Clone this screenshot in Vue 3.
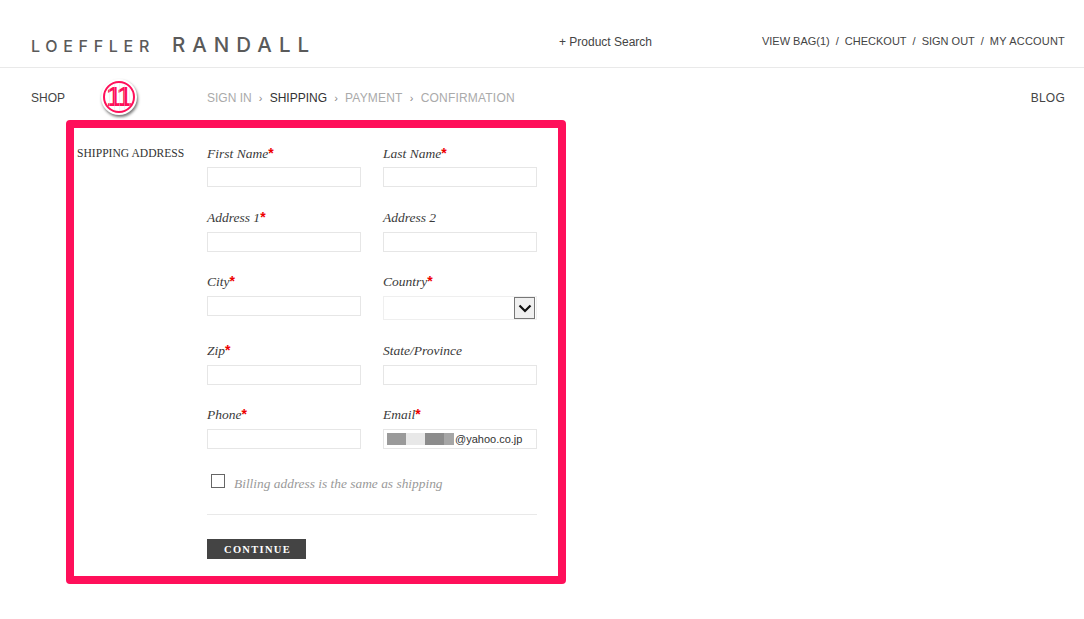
<script setup>
const rows = [
  [{ label: 'First Name', req: true }, { label: 'Last Name', req: true }],
  [{ label: 'Address 1', req: true }, { label: 'Address 2' }],
  [{ label: 'City', req: true }, { label: 'Country', req: true, kind: 'select' }],
  [{ label: 'Zip', req: true }, { label: 'State/Province' }],
  [{ label: 'Phone', req: true }, { label: 'Email', req: true, kind: 'email' }]
]
const blocks = [
  { w: 19, c: '#9a9a9a' },
  { w: 19, c: '#e8e8e8' },
  { w: 19, c: '#8c8c8c' },
  { w: 10, c: '#a6a6a6' }
]
</script>

<template>
  <div class="page">
    <header class="top">
      <div class="logo"><span class="logo-a">LOEFFLER</span><span class="logo-b">RANDALL</span></div>
      <div class="search">+ Product Search</div>
      <nav class="account">
        <span>VIEW BAG(1)</span><i>/</i><span>CHECKOUT</span><i>/</i><span>SIGN OUT</span><i>/</i><span>MY ACCOUNT</span>
      </nav>
    </header>

    <div class="nav">
      <span class="shop">SHOP</span>
      <div class="badge"><span class="badge-ring">11</span></div>
      <div class="steps">
        <span class="off">SIGN IN</span><b>›</b><span class="on">SHIPPING</span><b>›</b><span class="off">PAYMENT</span><b>›</b><span class="off">CONFIRMATION</span>
      </div>
      <span class="blog">BLOG</span>
    </div>

    <section class="frame">
      <h2 class="title">SHIPPING ADDRESS</h2>
      <form class="form" @submit.prevent>
        <div class="grid">
          <template v-for="(row, r) in rows" :key="r">
            <div v-for="f in row" :key="f.label" class="field">
              <label class="label">{{ f.label }}<em v-if="f.req">*</em></label>
              <div v-if="f.kind === 'select'" class="box select">
                <span class="arrow">
                  <svg width="14" height="9" viewBox="0 0 14 9"><path d="M1.5 1.5 7 7l5.500-5.500" fill="none" stroke="#111" stroke-width="2.200"/></svg>
                </span>
              </div>
              <div v-else-if="f.kind === 'email'" class="box email">
                <span v-for="(b, i) in blocks" :key="i" class="mask" :style="{ width: b.w + 'px', background: b.c }"></span>
                <span class="mail">@yahoo.co.jp</span>
              </div>
              <input v-else class="box" type="text" />
            </div>
          </template>
        </div>
        <div class="billing">
          <span class="check"></span>
          <span class="billing-text">Billing address is the same as shipping</span>
        </div>
        <hr class="rule" />
        <button class="continue" type="submit">CONTINUE</button>
      </form>
    </section>
  </div>
</template>

<style scoped>
.page {
  width: 1084px;
  height: 619px;
  overflow: hidden;
  background: #fff;
  color: #444;
  font-family: "Liberation Sans", Arial, sans-serif;
  font-size: 12px;
}
.top {
  height: 67px;
  border-bottom: 1px solid #e9e9e9;
  display: flex;
  padding: 0 19px 0 31px;
  position: relative;
}
.logo {
  width: 528px;
  padding-top: 33px;
  font-family: Inter, sans-serif;
  font-weight: 500;
  color: #5a5a5a;
  display: flex;
  align-items: baseline;
  white-space: nowrap;
}
.logo-a {
  font-size: 16px;
  letter-spacing: 5.700px;
  line-height: 24px;
  width: 141px;
}
.logo-b {
  font-size: 20.500px;
  letter-spacing: 7px;
  line-height: 24px;
}
.search {
  padding-top: 35px;
  line-height: 14px;
  width: 203px;
}
.account {
  padding-top: 35px;
  line-height: 13px;
  font-size: 11px;
  white-space: nowrap;
  flex: 1;
  display: flex;
  justify-content: flex-end;
}
.account i {
  font-style: normal;
  margin: 0 6px;
}
.account span:last-child {
  letter-spacing: 0.200px;
}
.nav {
  height: 52px;
  display: flex;
  padding: 0 19px 0 31px;
  position: relative;
  font-size: 12px;
  line-height: 60px;
}
.nav > span,
.steps {
  height: 60px;
}
.shop {
  width: 176px;
}
.blog {
  letter-spacing: 0.250px;
}
.steps {
  flex: 1;
  white-space: nowrap;
}
.steps b {
  font-weight: normal;
  color: #888;
  margin: 0 7.170px;
  font-size: 11px;
}
.off {
  color: #aaa;
}
.on {
  color: #333;
}
.on ~ .off {
  letter-spacing: 0.200px;
}
.badge {
  position: absolute;
  left: 101px;
  top: 11px;
  width: 36px;
  height: 36px;
  border-radius: 50%;
  background: #fff;
  box-shadow: 1px 2px 3px rgba(0, 0, 0, 0.55);
  display: flex;
  align-items: center;
  justify-content: center;
}
.badge-ring {
  position: relative;
  width: 32px;
  height: 32px;
  box-sizing: border-box;
  border: 2px solid #ff0f5a;
  border-radius: 50%;
  color: #ff0f5a;
  font-weight: bold;
  font-size: 28px;
  line-height: 28px;
  letter-spacing: -3.500px;
  text-align: center;
  padding-right: 3px;
  overflow: hidden;
}
.badge-ring::after {
  content: "";
  position: absolute;
  inset: 0;
  background: repeating-linear-gradient(90deg, transparent 0 4px, rgba(220, 220, 220, 0.35) 4px 5px);
}
.frame {
  width: 500px;
  height: 464px;
  box-sizing: border-box;
  margin-left: 66px;
  border: 8px solid #ff0f5a;
  border-radius: 4px;
  display: flex;
  font-family: "Liberation Serif", serif;
}
.title {
  margin: 0;
  width: 133px;
  padding: 19px 0 0 3px;
  box-sizing: border-box;
  font-size: 11.600px;
  line-height: 14px;
  font-weight: normal;
  color: #333;
  white-space: nowrap;
}
.form {
  width: 330px;
  padding-top: 14px;
}
.grid {
  display: grid;
  grid-template-columns: 154px 154px;
  column-gap: 22px;
  grid-template-rows: 65px 64px 69px 64px 45px;
}
.label {
  display: block;
  height: 25px;
  line-height: 22px;
  font-size: 13.500px;
  font-style: italic;
  color: #3a3a3a;
}
.field:nth-child(-n + 2) .label {
  line-height: 24px;
}
.label em {
  color: #e00;
  font-family: "Liberation Sans", Arial, sans-serif;
  font-weight: bold;
  font-style: normal;
  font-size: 14px;
  line-height: 0;
}
.box {
  display: flex;
  align-items: center;
  width: 154px;
  height: 20px;
  box-sizing: border-box;
  border: 1px solid #e6e6e6;
  background: #fff;
  padding: 0;
  margin: 0;
  outline: none;
}
.select {
  height: 24px;
  border-color: #efefef;
  justify-content: flex-end;
  padding-right: 1px;
}
.arrow {
  width: 21px;
  height: 22px;
  box-sizing: border-box;
  border: 1px solid #777;
  background: #f0f0f0;
  display: flex;
  align-items: center;
  justify-content: center;
}
.email {
  padding: 0 0 0 3px;
}
.mask {
  height: 12px;
  flex: none;
}
.mail {
  margin-left: 1px;
  font-family: "Liberation Sans", Arial, sans-serif;
  font-size: 11px;
  color: #333;
}
.billing {
  margin-top: 25px;
  height: 14px;
  display: flex;
  padding-left: 4px;
}
.check {
  width: 14px;
  height: 14px;
  box-sizing: border-box;
  border: 1px solid #666;
  background: #fff;
}
.billing-text {
  margin-left: 9px;
  font-style: italic;
  font-size: 13.400px;
  line-height: 19px;
  color: #999;
  white-space: nowrap;
}
.rule {
  width: 330px;
  height: 1px;
  margin: 26px 0 24px;
  border: 0;
  background: #e9e9e9;
}
.continue {
  display: block;
  width: 99px;
  height: 20px;
  padding: 0 0 0 2px;
  border: 0;
  background: #444;
  color: #fff;
  font-family: "Liberation Serif", serif;
  font-weight: bold;
  font-size: 10.500px;
  letter-spacing: 1.300px;
}
</style>

<style>
html, body { margin: 0; background: #fff; }
</style>
